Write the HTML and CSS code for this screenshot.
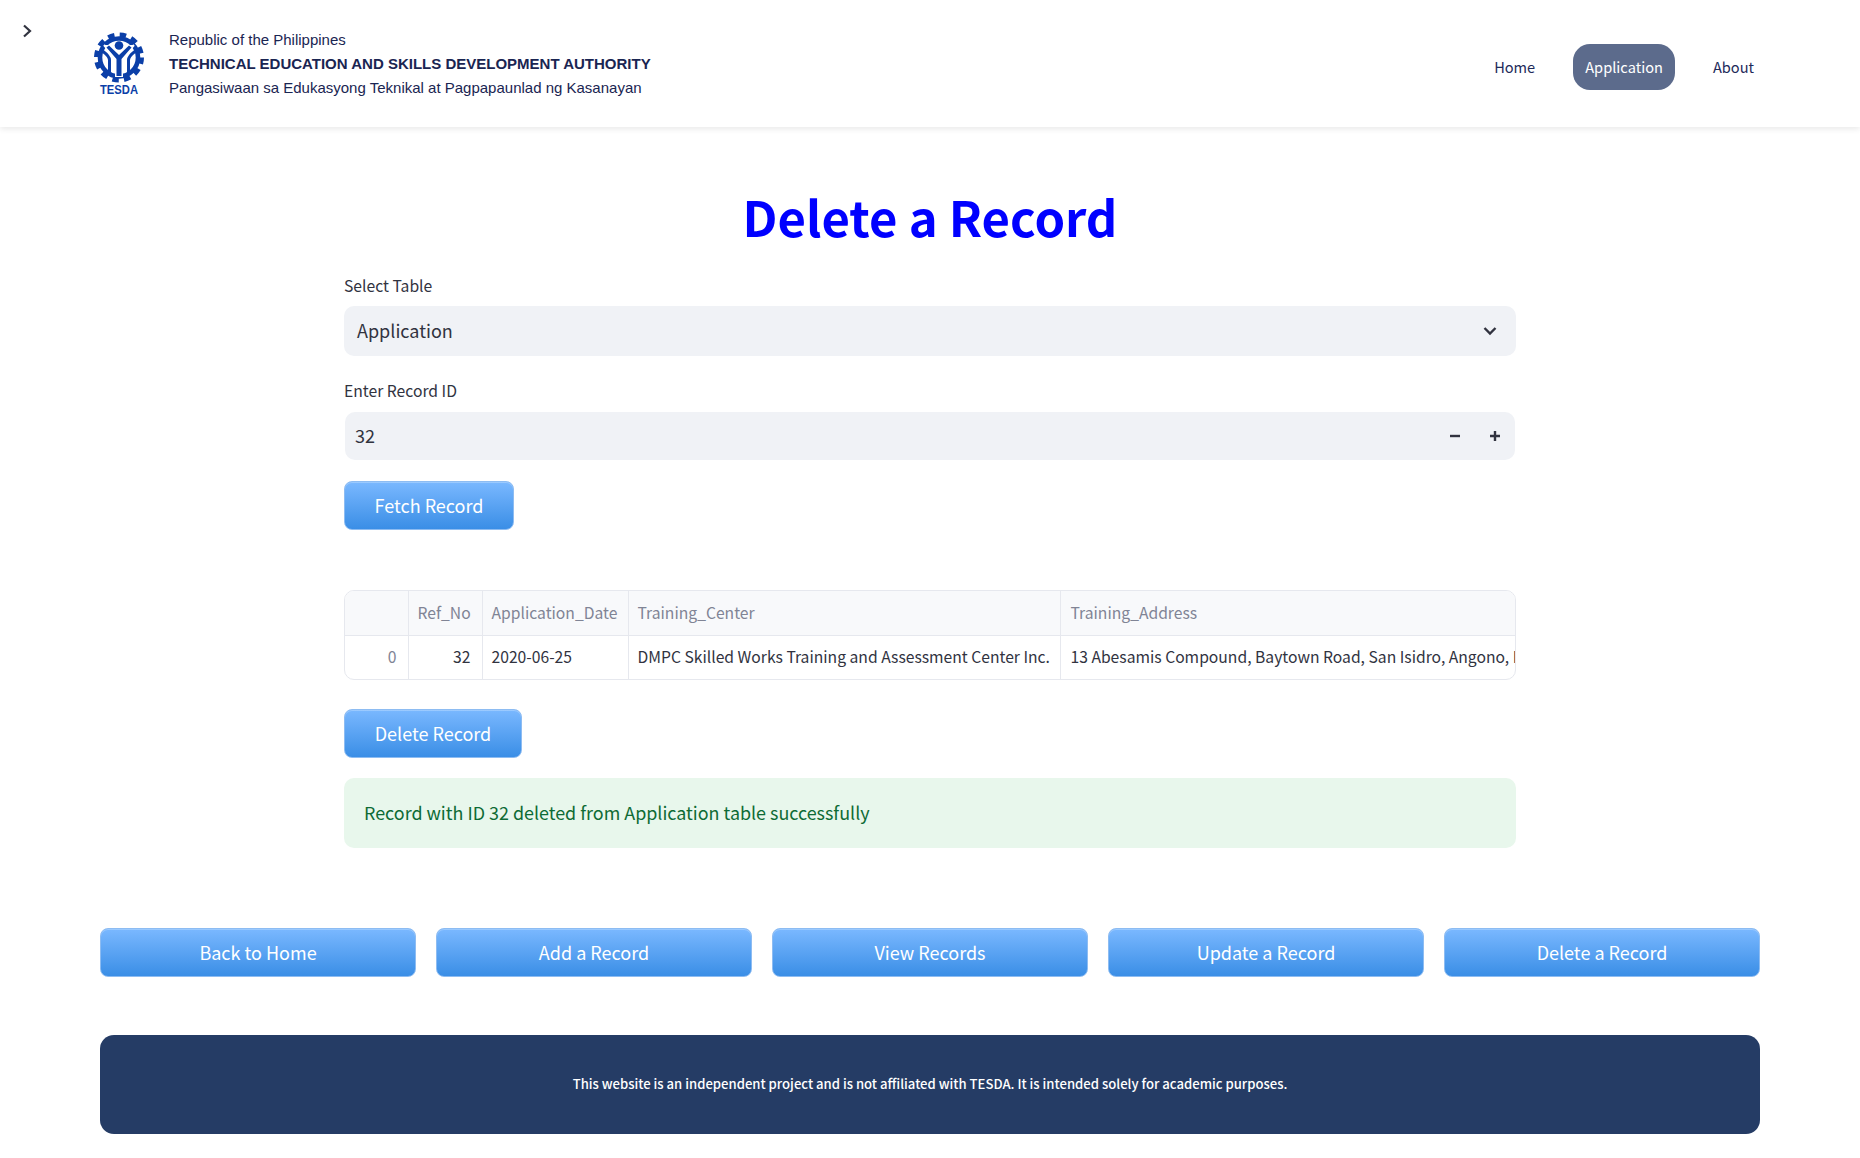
FILE: index.html
```html
<!DOCTYPE html>
<html lang="en">
<head>
<meta charset="utf-8">
<title>Delete a Record</title>
<link rel="stylesheet" href="styles.css">
</head>
<body>
<header class="topbar">
  <svg class="sidebar-toggle" viewBox="0 0 12 16" width="12" height="16"><path d="M3 2.500 9 8l-6 5.500" fill="none" stroke="#31333f" stroke-width="2.200"/></svg>
  <div class="brand">
    <svg class="logo" viewBox="0 0 54 66" width="54" height="66">
      <circle cx="27" cy="27.500" r="22.700" fill="none" stroke="#0b3fa8" stroke-width="4.600" stroke-dasharray="6.500 5.390"/>
      <circle cx="27" cy="27.500" r="19" fill="none" stroke="#0b3fa8" stroke-width="4.600"/>
      <path d="M17.500 44V30c0-3-3-6-7-9M36.500 44V30c0-3 3-6 7-9" fill="none" stroke="#0b3fa8" stroke-width="3"/>
      <path d="M12 15 24 29v17h6V29L42 15" fill="#fff" stroke="#fff" stroke-width="2"/>
      <path d="M14.500 17.500 24.500 29v17h5V29L39.500 17.500l-2.500-2L27 25 17 15.500z" fill="#0b3fa8"/>
      <circle cx="27" cy="15.500" r="4.300" fill="#0b3fa8"/>
      <text class="logo-text" x="27" y="64" text-anchor="middle" textLength="38" lengthAdjust="spacingAndGlyphs">TESDA</text>
    </svg>
    <div class="agency">
      <div class="agency-line">Republic of the Philippines</div>
      <div class="agency-line agency-bold">TECHNICAL EDUCATION AND SKILLS DEVELOPMENT AUTHORITY</div>
      <div class="agency-line">Pangasiwaan sa Edukasyong Teknikal at Pagpapaunlad ng Kasanayan</div>
    </div>
  </div>
  <nav class="nav">
    <a class="nav-item">Home</a>
    <a class="nav-item nav-active">Application</a>
    <a class="nav-item">About</a>
  </nav>
</header>

<main class="content">
  <h1 class="title">Delete a Record</h1>
  <div class="form">
    <label class="label">Select Table</label>
    <div class="select">
      <span class="field-value">Application</span>
      <svg viewBox="0 0 14 10" width="14" height="10"><path d="M1.500 2 7 7.500 12.500 2" fill="none" stroke="#31333f" stroke-width="2.400"/></svg>
    </div>
    <label class="label label-second">Enter Record ID</label>
    <div class="number">
      <span class="field-value">32</span>
      <span class="stepper">
        <svg viewBox="0 0 12 12" width="12" height="12"><path d="M1 6h10" stroke="#31333f" stroke-width="2.400"/></svg>
        <svg viewBox="0 0 12 12" width="12" height="12"><path d="M1 6h10M6 1v10" stroke="#31333f" stroke-width="2.400"/></svg>
      </span>
    </div>
    <button class="btn btn-fetch">Fetch Record</button>

    <div class="table-wrap">
      <table class="table">
        <colgroup>
          <col class="c-index"><col class="c-ref"><col class="c-date"><col class="c-center"><col class="c-address">
        </colgroup>
        <thead>
          <tr><th></th><th>Ref_No</th><th>Application_Date</th><th>Training_Center</th><th class="cell-last">Training_Address</th></tr>
        </thead>
        <tbody>
          <tr>
            <td class="cell-index">0</td>
            <td class="cell-num">32</td>
            <td>2020-06-25</td>
            <td>DMPC Skilled Works Training and Assessment Center Inc.</td>
            <td class="cell-last">13 Abesamis Compound, Baytown Road, San Isidro, Angono, Rizal</td>
          </tr>
        </tbody>
      </table>
    </div>

    <button class="btn btn-delete">Delete Record</button>
    <div class="alert">Record with ID 32 deleted from Application table successfully</div>
  </div>

  <div class="actions">
    <button class="btn">Back to Home</button>
    <button class="btn">Add a Record</button>
    <button class="btn">View Records</button>
    <button class="btn">Update a Record</button>
    <button class="btn">Delete a Record</button>
  </div>

  <footer class="footer">This website is an independent project and is not affiliated with TESDA. It is intended solely for academic purposes.</footer>
</main>
</body>
</html>
```
FILE: styles.css
```css
* { box-sizing: border-box; }
html, body { margin: 0; padding: 0; background: #fff; }
body {
  font-family: "Noto Sans CJK SC", "Noto Sans", sans-serif;
  color: #31333f;
  height: 1158px;
  overflow: hidden;
}
.topbar {
  position: relative;
  height: 127px;
  display: flex;
  align-items: center;
  justify-content: space-between;
  padding: 0 94px 0 94px;
  box-shadow: 0 2px 6px rgba(0,0,0,.09);
}
.sidebar-toggle { position: absolute; left: 21px; top: 23px; }
.brand { display: flex; align-items: flex-start; gap: 25px; margin-top: 1px; }
.logo { display: block; margin: 2px -2px 0; }
.logo-text { font: 700 12px "Liberation Sans", sans-serif; fill: #0b3fa8; }
.agency {
  font-family: "Liberation Sans", Arial, sans-serif;
  font-size: 15px;
  color: #1a2552;
}
.agency-line { height: 24px; line-height: 24px; white-space: nowrap; }
.agency-bold { font-weight: 700; }
.nav { display: flex; align-items: center; gap: 26px; margin-top: 7px; }
.nav-item {
  height: 46px;
  line-height: 46px;
  padding: 0 12px;
  font-size: 14.600px;
  border-radius: 17px;
  color: #1e2a5a;
}
.nav-active { background: #5c6b8c; color: #fff; }

.content { padding: 0 100px; }
.title {
  margin: 57px 0 0;
  height: 64px;
  line-height: 64px;
  font-size: 49px;
  font-weight: 700;
  text-align: center;
  color: #0000ff;
}
.form { width: 1172px; margin: 0 auto; padding-top: 26px; }
.label { display: block; height: 24px; line-height: 24px; font-size: 15.700px; }
.label-second { margin-top: 23px; }
.select {
  margin-top: 8px;
  height: 50px;
  display: flex;
  align-items: center;
  justify-content: space-between;
  padding: 0 19px 1px 13px;
  background: #f0f2f6;
  border-radius: 10px;
  font-size: 18px;
}
.number {
  margin: 9px 1px 0;
  height: 48px;
  display: flex;
  align-items: center;
  justify-content: space-between;
  padding: 0 14px 1px 10px;
  background: #f0f2f6;
  border-radius: 10px;
  font-size: 18px;
}
.field-value { margin-bottom: 2px; }
.stepper { display: flex; gap: 28px; }
.stepper svg { display: block; }
.btn {
  display: block;
  height: 49px;
  padding: 0 0 2px;
  font: inherit;
  font-size: 18px;
  color: #fff;
  border: 1px solid #8dbcf2;
  border-radius: 8px;
  background: linear-gradient(to bottom, #7ab8ff, #3a8ee6);
  box-shadow: inset 0 1px 0 rgba(255,255,255,.25);
}
.btn-fetch { margin-top: 21px; width: 170px; }
.btn-delete { margin-top: 29px; width: 178px; }
.table-wrap {
  margin-top: 60px;
  height: 90px;
  border: 1px solid #e6e8ee;
  border-radius: 10px;
  overflow: hidden;
}
.table {
  width: 1171px;
  table-layout: fixed;
  border-collapse: collapse;
  font-size: 15.680px;
}
.c-index { width: 63px; }
.c-ref { width: 74px; }
.c-date { width: 146px; }
.c-center { width: 432px; }
.table th, .table td {
  padding: 0 9px;
  white-space: nowrap;
  overflow: hidden;
  border-left: 1px solid #e6e8ee;
  text-align: left;
}
.table th:first-child, .table td:first-child { border-left: 0; }
.table th {
  height: 44px;
  font-weight: 400;
  color: #808495;
  background: #f8f9fb;
  border-bottom: 1px solid #e6e8ee;
}
.table td { height: 44px; padding-bottom: 2px; color: #31333f; }
.table .cell-index { text-align: right; color: #808495; padding-right: 11px; }
.table .cell-num { text-align: right; padding-right: 11px; }
.table .cell-last { padding-left: 10px; padding-right: 0; }
.alert {
  margin-top: 20px;
  height: 70px;
  line-height: 68px;
  padding: 0 20px;
  background: #e8f7ec;
  border-radius: 10px;
  color: #0e6b35;
  font-size: 17.920px;
}
.actions {
  margin-top: 80px;
  display: grid;
  grid-template-columns: repeat(5, 1fr);
  gap: 20px;
}
.actions .btn { width: 100%; }
.footer {
  margin-top: 58px;
  height: 99px;
  line-height: 98px;
  background: #253c65;
  border-radius: 14px;
  text-align: center;
  color: #fff;
  font-size: 13.100px;
  font-weight: 500;
}
```
